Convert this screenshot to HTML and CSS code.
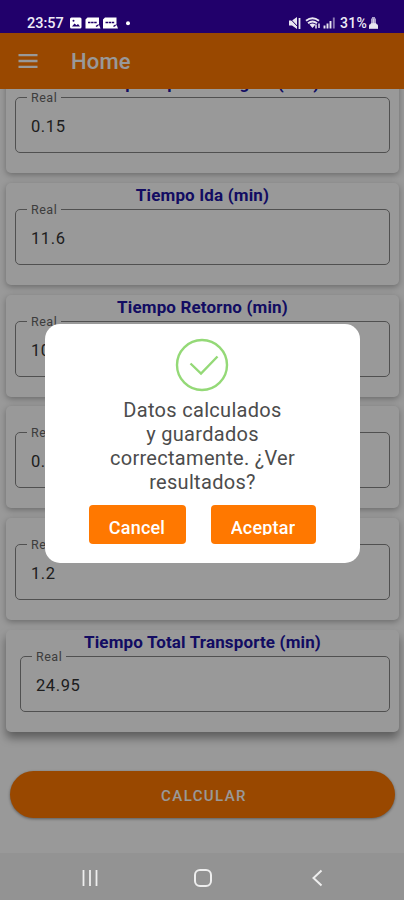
FILE: index.html
```html
<!DOCTYPE html>
<html lang="es">
<head>
    <meta charset="UTF-8">
    <meta name="viewport" content="width=device-width, initial-scale=1.0">
    <title>Home</title>
    <link rel="stylesheet" href="styles.css">
</head>
<body>
    <!-- Status bar -->
    <div class="status-bar">
        <span class="clock">23:57</span>
        <svg class="status-left" width="64" height="14" viewBox="0 0 64 14">
            <rect x="1" y="1.5" width="11.5" height="11" rx="1.5" fill="#fff"/>
            <path d="M3 10.5l2.5-3 2 1.8 1.5-1.3 2 2.5z" fill="#21006b"/>
            <circle cx="4.5" cy="4.8" r="1" fill="#21006b"/>
            <path d="M18.5 1.5h11.5v7l1.5 4h-15v-9z" fill="#fff"/>
            <path d="M19 6.500h9M27 10.500l3-2" stroke="#21006b" stroke-width="1.500" stroke-dasharray="2.500 .6" fill="none"/>
            <path d="M36 1.500h11.500v7l1.500 4h-15v-9z" fill="#fff"/>
            <path d="M36.500 6.500h9M44.500 10.500l3-2" stroke="#21006b" stroke-width="1.500" stroke-dasharray="2.500 .6" fill="none"/>
            <circle cx="59" cy="7.300" r="2" fill="#fff"/>
        </svg>
        <svg class="status-right" width="48" height="14" viewBox="0 0 48 14">
            <path d="M1 4.500h3l5-3.500v12l-5-3.500H1z" fill="#e9e6f2"/>
            <path d="M1 1.500l10.500 11" stroke="#21006b" stroke-width="1"/>
            <path d="M11.500 2v11" stroke="#e9e6f2" stroke-width="1.800"/>
            <path d="M18 4.800q6.500-5 13 0M20 7.300q4.500-3.500 9 0" stroke="#e9e6f2" stroke-width="1.900" fill="none"/>
            <path d="M21.500 8.500q3-2 6 0l-3 3.500z" fill="#e9e6f2"/>
            <path d="M28 8.500v4M31 7.500v4.500" stroke="#e9e6f2" stroke-width="1.500"/>
            <path d="M36.500 12.500v-3M39.500 12.500v-5M42.500 12.500v-7.500" stroke="#e9e6f2" stroke-width="1.900"/>
            <path d="M45.800 12.500v-11" stroke="#8c7bb4" stroke-width="1.900"/>
        </svg>
        <span class="battery">31%</span>
        <svg width="9" height="13" viewBox="0 0 9 13">
            <path d="M3 1h3v1.500h1V8H2V2.500h1z" fill="#a99bcb"/>
            <path d="M4.500 3v6M0 12.500V9.500l2-2h5l2 2v3z" fill="#e9e6f2" stroke="#e9e6f2" stroke-width=".6"/>
        </svg>
    </div>

    <div class="app">
        <header class="toolbar">
            <svg width="20" height="16" viewBox="0 0 20 16">
                <path d="M.5 2.200h19M.5 8h19M.5 13.800h19" stroke="#fff" stroke-width="2.300"/>
            </svg>
            <h1>Home</h1>
        </header>

        <main class="content">
            <div class="card-list">
                <section class="card">
                    <h2>Tiempo esperas carguío (min)</h2>
                    <fieldset><legend>Real</legend><p>0.15</p></fieldset>
                </section>
                <section class="card">
                    <h2>Tiempo Ida (min)</h2>
                    <fieldset><legend>Real</legend><p>11.6</p></fieldset>
                </section>
                <section class="card">
                    <h2>Tiempo Retorno (min)</h2>
                    <fieldset><legend>Real</legend><p>10</p></fieldset>
                </section>
                <section class="card">
                    <h2></h2>
                    <fieldset><legend>Real</legend><p>0.</p></fieldset>
                </section>
                <section class="card">
                    <h2></h2>
                    <fieldset><legend>Real</legend><p>1.2</p></fieldset>
                </section>
                <section class="card card-total">
                    <h2>Tiempo Total Transporte (min)</h2>
                    <fieldset><legend>Real</legend><p>24.95</p></fieldset>
                </section>
            </div>
            <button class="calculate" type="button">CALCULAR</button>
        </main>

        <!-- Confirmation dialog over the form -->
        <div class="overlay">
            <div class="dialog">
                <svg class="check" width="54" height="54" viewBox="0 0 54 54" fill="none" stroke="#94d977" stroke-width="2.400">
                    <circle cx="27" cy="27" r="25"/>
                    <path d="M15.500 25.500L26 35.500L42.500 18.500"/>
                </svg>
                <p class="message">Datos calculados<br>y guardados<br>correctamente. ¿Ver<br>resultados?</p>
                <div class="actions">
                    <button class="action cancel" type="button"><span>Cancel</span></button>
                    <button class="action accept" type="button"><span>Aceptar</span></button>
                </div>
            </div>
        </div>
    </div>

    <!-- System navigation -->
    <nav class="nav-bar">
        <svg width="18" height="18" viewBox="0 0 18 18">
            <path d="M2.500 1v16M9 1v16M15.500 1v16" stroke="#eee" stroke-width="1.800"/>
        </svg>
        <svg width="20" height="20" viewBox="0 0 20 20">
            <rect x="2" y="2" width="16" height="16" rx="5" fill="none" stroke="#eee" stroke-width="2"/>
        </svg>
        <svg width="12" height="18" viewBox="0 0 12 18">
            <path d="M10.500 1.500L2.500 9l8 7.500" fill="none" stroke="#eee" stroke-width="2"/>
        </svg>
    </nav>
</body>
</html>
```

FILE: styles.css
```css
* {
    box-sizing: border-box;
}

body {
    font-family: Roboto, "Liberation Sans", sans-serif;
    margin: 0;
    height: 900px;
    display: flex;
    flex-direction: column;
    overflow: hidden;
    background-color: #999;
}

h1, h2, p {
    margin: 0;
}

svg {
    display: block;
    flex: none;
}

/* Status bar */
.status-bar {
    height: 33px;
    padding: 12px 26px 0 27px;
    display: flex;
    align-items: center;
    background-color: #21006b;
    color: #eeebf6;
    font-size: 14px;
    font-weight: 500;
}

.clock {
    width: 36px;
    margin-right: 6px;
    padding-top: 1px;
    font-size: 14.5px;
}

.status-right {
    margin-left: auto;
    margin-right: 4px;
}

.battery {
    width: 29px;
    letter-spacing: 0.3px;
}

/* Everything between the two system bars */
.app {
    position: relative;
    height: 820px;
    display: flex;
    flex-direction: column;
    background-color: #fff;
}

.toolbar {
    height: 55.500px;
    flex: none;
    padding-left: 18px;
    display: flex;
    align-items: center;
    gap: 33px;
    background-color: #ff7800;
    color: #fff;
}

.toolbar h1 {
    font-size: 22px;
    font-weight: 500;
    letter-spacing: 0.2px;
    padding-top: 2px;
}

.content {
    flex: 1;
    overflow: hidden;
    padding: 0 5px 0 6px;
}

/* The list is scrolled a little under the toolbar */
.card-list {
    margin-top: -17.300px;
    display: flex;
    flex-direction: column;
    gap: 9.700px;
}

.card {
    height: 102px;
    padding: 2px 9px 0;
    border-radius: 5px;
    background-color: #fff;
    box-shadow: 0 2px 6px rgba(0, 0, 0, 0.3);
}

.card h2 {
    height: 20px;
    line-height: 21px;
    font-size: 17px;
    font-weight: 700;
    letter-spacing: 0.15px;
    text-align: center;
    color: #2014a4;
}

.card fieldset {
    height: 63px;
    margin: -3px 0 0;
    padding: 0 11px;
    border: 1px solid #868686;
    border-radius: 5px;
}

.card legend {
    padding: 1px 4px 0;
    line-height: 14px;
    font-size: 12.500px;
    letter-spacing: 0.5px;
    color: #666;
}

.card p {
    padding: 10px 4px 0;
    line-height: 24px;
    font-size: 16.500px;
    letter-spacing: 0.6px;
    color: #333;
}

.card-total {
    box-shadow: 0 6px 10px rgba(0, 0, 0, 0.4);
}

.card-total fieldset {
    margin-left: 5px;
}

.calculate {
    display: block;
    width: 385px;
    height: 47px;
    margin: 39.500px 0 0 4px;
    padding: 2px 0 0 3px;
    border: none;
    border-radius: 24px;
    background-color: #ff7800;
    color: #fff;
    font-family: inherit;
    font-size: 15px;
    font-weight: 500;
    letter-spacing: 1.400px;
    box-shadow: 0 1px 3px rgba(0, 0, 0, 0.4);
}

/* Dialog */
.overlay {
    position: absolute;
    inset: 0;
    display: flex;
    justify-content: center;
    align-items: center;
    background-color: rgba(0, 0, 0, 0.4);
}

.dialog {
    width: 315px;
    height: 239px;
    padding-top: 14px;
    margin-left: 1px;
    display: flex;
    flex-direction: column;
    align-items: center;
    border-radius: 15px;
    background-color: #fff;
}

.check {
    margin-right: 1px;
}

.message {
    margin-top: 6px;
    text-align: center;
    font-size: 20px;
    line-height: 24px;
    letter-spacing: 0.3px;
    color: #4c4c4c;
}

.actions {
    margin-top: 11px;
    display: flex;
    gap: 25px;
}

.action {
    height: 39px;
    padding: 11px 1px 0 0;
    display: flex;
    justify-content: center;
    align-items: flex-start;
    border: none;
    border-radius: 4px;
    background-color: #ff7800;
    color: #fff;
    font-family: inherit;
    font-size: 18px;
    font-weight: 500;
}

.action span {
    height: 19px;
    line-height: 23px;
    letter-spacing: 0.2px;
    overflow: hidden;
}

.cancel {
    width: 97px;
}

.accept {
    width: 105px;
}

/* System navigation */
.nav-bar {
    height: 47px;
    padding: 2px 81px 0;
    display: grid;
    grid-template-columns: 112px 1fr auto;
    align-items: center;
    background-color: #939393;
}
```
